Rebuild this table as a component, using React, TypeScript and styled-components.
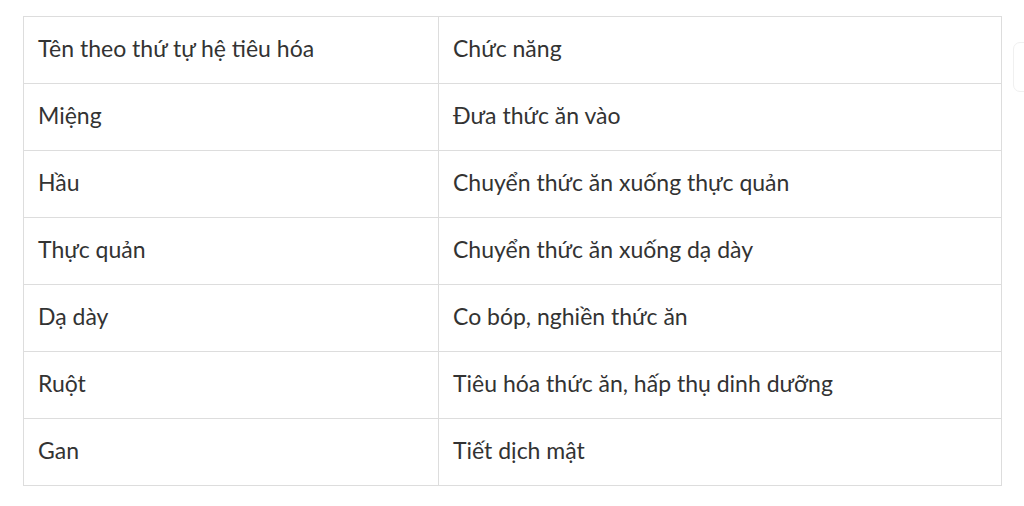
import React from "react";
import styled, { createGlobalStyle } from "styled-components";

const Global = createGlobalStyle`
  html, body { margin: 0; padding: 0; background: #ffffff; }
  body { font-family: Lato, "Open Sans", sans-serif; color: #333333; }
`;

const Page = styled.div`
  display: flex;
  align-items: flex-start;
  padding: 16px 0 0 23px;
  width: 1024px;
  height: 506px;
  box-sizing: border-box;
  overflow: hidden;
`;

const Table = styled.table`
  border-collapse: collapse;
  width: 979px;
  flex-shrink: 0;
  table-layout: fixed;
`;

const Cell = styled.td<{ $w?: number }>`
  border: 1px solid #dddddd;
  height: 67px;
  padding: 0 14px 4px 14px;
  box-sizing: border-box;
  font-size: 23px;
  line-height: 30px;
  color: #333333;
  vertical-align: middle;
  ${(p) => (p.$w ? `width: ${p.$w}px;` : "")}
`;

const SideTab = styled.div`
  flex-shrink: 0;
  margin: 26px 0 0 11px;
  width: 40px;
  height: 50px;
  border: 1px solid #f0f0f0;
  border-radius: 7px;
  box-sizing: border-box;
`;

const rows: [string, string][] = [
  ["Tên theo thứ tự hệ tiêu hóa", "Chức năng"],
  ["Miệng", "Đưa thức ăn vào"],
  ["Hầu", "Chuyển thức ăn xuống thực quản"],
  ["Thực quản", "Chuyển thức ăn xuống dạ dày"],
  ["Dạ dày", "Co bóp, nghiền thức ăn"],
  ["Ruột", "Tiêu hóa thức ăn, hấp thụ dinh dưỡng"],
  ["Gan", "Tiết dịch mật"],
];

export default function App() {
  return (
    <>
      <Global />
      <Page>
        <Table>
          <tbody>
            {rows.map(([a, b], i) => (
              <tr key={i}>
                <Cell $w={i === 0 ? 415 : undefined}>{a}</Cell>
                <Cell>{b}</Cell>
              </tr>
            ))}
          </tbody>
        </Table>
        <SideTab />
      </Page>
    </>
  );
}
